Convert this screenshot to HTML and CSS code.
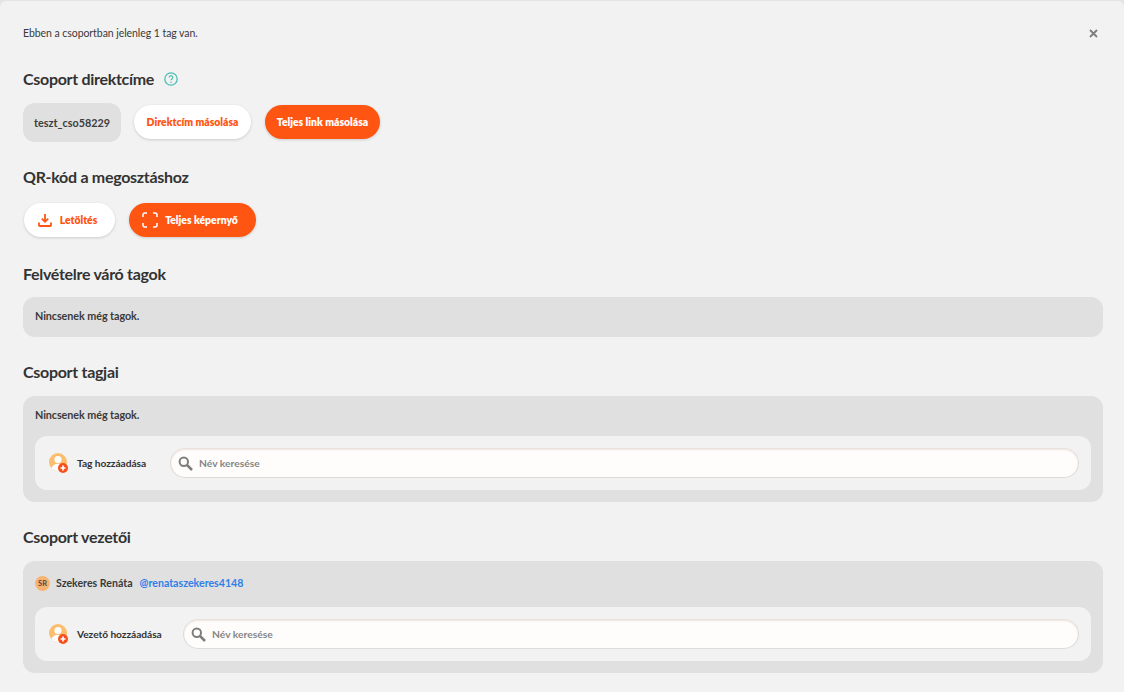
FILE: index.html
```html
<!DOCTYPE html>
<html lang="hu">

<head>
    <meta charset="UTF-8">
    <meta name="viewport" content="width=device-width, initial-scale=1.0">
    <title>Csoport</title>
    <link rel="stylesheet" href="styles.css">
</head>

<body>
    <div class="modal">
        <div class="top-row">
            <p class="info">Ebben a csoportban jelenleg 1 tag van.</p>
            <button class="close" aria-label="Bezárás">
                <svg width="9" height="9" viewBox="0 0 9 9">
                    <path d="M1 1l7 7M8 1L1 8" stroke="#7d7d7d" stroke-width="1.8" fill="none" />
                </svg>
            </button>
        </div>

        <section class="sec sec-link">
            <div class="title-row">
                <h2>Csoport direktcíme</h2>
                <svg class="help" width="14" height="14" viewBox="0 0 14 14">
                    <circle cx="7" cy="7" r="6.2" fill="none" stroke="#4fbdb4" stroke-width="1.3" />
                    <path d="M5.2 5.5a1.8 1.8 0 1 1 2.7 1.6c-.6.3-.9.6-.9 1.2" fill="none" stroke="#4fbdb4"
                        stroke-width="1.2" />
                    <circle cx="7" cy="10.2" r=".8" fill="#4fbdb4" />
                </svg>
            </div>
            <div class="btn-row btn-row-link">
                <div class="chip">teszt_cso58229</div>
                <a class="btn btn-white btn-copy">Direktcím másolása</a>
                <a class="btn btn-orange btn-full">Teljes link másolása</a>
            </div>
        </section>

        <section class="sec sec-qr">
            <h2>QR-kód a megosztáshoz</h2>
            <div class="btn-row btn-row-qr">
                <a class="btn btn-white btn-dl">
                    <svg width="14" height="14" viewBox="0 0 14 14">
                        <path d="M7 1v7.5M3.8 5.6L7 8.8l3.2-3.2" fill="none" stroke="#ff5512" stroke-width="1.8" />
                        <path d="M1 9.5v2.7c0 .4.4.8.8.8h10.400c.4 0 .8-.4.8-.8V9.500" fill="none" stroke="#ff5512"
                            stroke-width="1.8" />
                    </svg>
                    Letöltés
                </a>
                <a class="btn btn-orange btn-screen">
                    <svg width="16" height="16" viewBox="0 0 16 16">
                        <path d="M1 5V3a2 2 0 0 1 2-2h2M11 1h2a2 2 0 0 1 2 2v2M15 11v2a2 2 0 0 1-2 2h-2M5 15H3a2 2 0 0 1-2-2v-2"
                            fill="none" stroke="#fff" stroke-width="1.5" />
                    </svg>
                    Teljes képernyő
                </a>
            </div>
        </section>

        <section class="sec sec-wait">
            <h2>Felvételre váró tagok</h2>
            <div class="panel panel-empty">
                <p class="empty">Nincsenek még tagok.</p>
            </div>
        </section>

        <section class="sec sec-members">
            <h2>Csoport tagjai</h2>
            <div class="panel">
                <p class="empty">Nincsenek még tagok.</p>
                <div class="add-box">
                    <svg class="add-icon" width="19" height="21" viewBox="0 0 19 21">
                        <circle cx="9" cy="9" r="9" fill="#fbbd6e" />
                        <circle cx="9" cy="6.500" r="3.600" fill="#fff" />
                        <path d="M2.500 15.200c.8-3 3.300-4.500 6.500-4.500s5.700 1.500 6.500 4.500a9 9 0 0 1-13 0z" fill="#fff" />
                        <circle cx="14" cy="15" r="5" fill="#f4511e" />
                        <path d="M14 12.500v5M11.500 15h5" stroke="#fff" stroke-width="1.600" />
                    </svg>
                    <span class="add-label label-tag">Tag hozzáadása</span>
                    <div class="search">
                        <svg width="15" height="15" viewBox="0 0 15 15">
                            <circle cx="5.800" cy="5.800" r="4.200" fill="none" stroke="#7d7d7d" stroke-width="2" />
                            <path d="M9 9l5 5" stroke="#7d7d7d" stroke-width="2.500" />
                        </svg>
                        <span>Név keresése</span>
                    </div>
                </div>
            </div>
        </section>

        <section class="sec sec-leaders">
            <h2>Csoport vezetői</h2>
            <div class="panel">
                <div class="owner">
                    <span class="avatar">SR</span>
                    <span class="owner-name">Szekeres Renáta</span>
                    <span class="owner-handle">@renataszekeres4148</span>
                </div>
                <div class="add-box">
                    <svg class="add-icon" width="19" height="21" viewBox="0 0 19 21">
                        <circle cx="9" cy="9" r="9" fill="#fbbd6e" />
                        <circle cx="9" cy="6.500" r="3.600" fill="#fff" />
                        <path d="M2.500 15.200c.8-3 3.300-4.500 6.500-4.500s5.700 1.500 6.500 4.500a9 9 0 0 1-13 0z" fill="#fff" />
                        <circle cx="14" cy="15" r="5" fill="#f4511e" />
                        <path d="M14 12.500v5M11.500 15h5" stroke="#fff" stroke-width="1.600" />
                    </svg>
                    <span class="add-label label-leader">Vezető hozzáadása</span>
                    <div class="search">
                        <svg width="15" height="15" viewBox="0 0 15 15">
                            <circle cx="5.800" cy="5.800" r="4.200" fill="none" stroke="#7d7d7d" stroke-width="2" />
                            <path d="M9 9l5 5" stroke="#7d7d7d" stroke-width="2.500" />
                        </svg>
                        <span>Név keresése</span>
                    </div>
                </div>
            </div>
        </section>
    </div>
</body>

</html>
```

FILE: styles.css
```css
* {
    box-sizing: border-box;
}

html,
body {
    height: 100%;
}

body {
    margin: 0;
    overflow: hidden;
    background-color: #e4e4e4;
    color: #333333;
    font-family: "Lato", "Liberation Sans", sans-serif;
}

.modal {
    height: 692px;
    margin-top: 1px;
    padding: 21px 21px 0 23px;
    border-radius: 6px 6px 0 0;
    background-color: #f2f2f2;
}

h2 {
    margin: 0;
    font-size: 16px;
    line-height: 22px;
    font-weight: 700;
    letter-spacing: -0.3px;
    color: #333333;
}

p {
    margin: 0;
}

.top-row {
    display: flex;
    justify-content: space-between;
    align-items: center;
    height: 22px;
}

.info {
    font-size: 10.5px;
    line-height: 16px;
    letter-spacing: -0.06px;
    color: #3a3a3a;
}

.close {
    display: flex;
    margin-right: 5px;
    padding: 0;
    border: 0;
    background: none;
}

.sec-link {
    padding-top: 24px;
}

.sec-qr {
    padding-top: 24px;
}

.sec-wait {
    padding-top: 26px;
}

.sec-members {
    padding-top: 24px;
}

.sec-leaders {
    padding-top: 24px;
}

.title-row {
    display: flex;
    align-items: center;
    gap: 10px;
}

.btn-row {
    display: flex;
    align-items: center;
    gap: 13px;
    margin-top: 13px;
}

.btn-row-link {
    align-items: flex-start;
}

.btn-row-link .btn {
    margin-top: 2px;
}

.btn-row-qr {
    margin-top: 15px;
    margin-left: 1px;
    gap: 14px;
}

.chip {
    display: flex;
    align-items: center;
    justify-content: center;
    width: 98px;
    height: 39px;
    border-radius: 12px;
    background-color: #e0e0e0;
    font-size: 10.8px;
    font-weight: 700;
    color: #3d3d3d;
}

.btn {
    display: flex;
    align-items: center;
    justify-content: center;
    height: 34px;
    border-radius: 17px;
    font-size: 10.4px;
    font-weight: 800;
    box-shadow: 0 1px 3px rgba(0, 0, 0, 0.16);
}

.btn-white {
    background-color: #ffffff;
    color: #ff5512;
}

.btn-orange {
    background-color: #ff5512;
    color: #ffffff;
}

.btn-copy {
    width: 117px;
}

.btn-full {
    width: 115px;
    margin-left: 1px;
}

.btn-dl {
    width: 91px;
    padding-right: 4px;
    gap: 8px;
}

.btn-screen {
    width: 127px;
    padding-right: 5px;
    gap: 7px;
}

.panel {
    margin-top: 13px;
    padding: 12px;
    border-radius: 12px;
    background-color: #e0e0e0;
}

.panel-empty {
    height: 40px;
    margin-top: 12px;
}

.empty {
    font-size: 10.8px;
    line-height: 14px;
    font-weight: 700;
    letter-spacing: -0.08px;
    color: #3a3a3a;
}

.add-box {
    display: flex;
    align-items: center;
    height: 54px;
    margin-top: 14px;
    padding: 0 12px 0 14px;
    border-radius: 12px;
    background-color: #f2f2f2;
}

.add-icon {
    flex: none;
}

.add-label {
    flex: none;
    margin-left: 9px;
    font-size: 10.2px;
    font-weight: 700;
    letter-spacing: -0.05px;
    color: #333333;
}

.label-tag {
    width: 93px;
}

.label-leader {
    width: 106px;
}

.search {
    display: flex;
    flex: 1;
    align-items: center;
    gap: 6px;
    height: 30px;
    padding-left: 7px;
    border: 1px solid #dedad8;
    border-top-color: #eadfd9;
    border-radius: 15px;
    background-color: #fffdfc;
    box-shadow: inset 0 1px 2px rgba(120, 90, 70, 0.14);
    font-size: 10.3px;
    font-weight: 700;
    color: #858585;
}

.owner {
    display: flex;
    align-items: center;
    height: 20px;
    font-size: 10.6px;
    font-weight: 700;
}

.avatar {
    display: flex;
    align-items: center;
    justify-content: center;
    width: 15px;
    height: 15px;
    border-radius: 50%;
    background-color: #f8b370;
    font-size: 7.5px;
    color: #4a4a4a;
}

.owner-name {
    margin-left: 6px;
    color: #3a3a3a;
}

.owner-handle {
    margin-left: 7px;
    color: #2f7fe8;
}
```
